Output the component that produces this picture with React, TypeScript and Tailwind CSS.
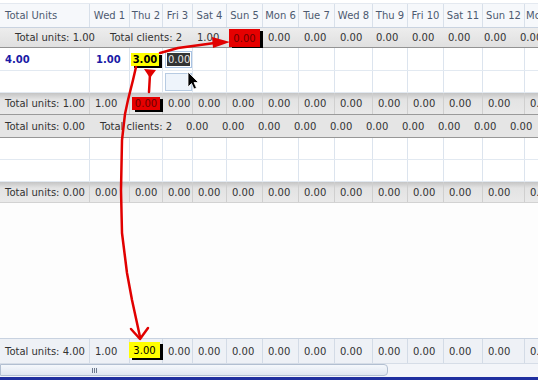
const COLS = [
  "w-[90px]",
  "w-[40px]",
  "w-[33px]",
  "w-[30px]",
  "w-[34px]",
  "w-[36px]",
  "w-[36px]",
  "w-[36px]",
  "w-[38px]",
  "w-[35px]",
  "w-[36px]",
  "w-[39px]",
  "w-[42px]",
  "w-[40px]",
];

const DAYS = ["Total Units", "Wed 1", "Thu 2", "Fri 3", "Sat 4", "Sun 5", "Mon 6", "Tue 7", "Wed 8", "Thu 9", "Fri 10", "Sat 11", "Sun 12", "Mon 13"];

const zeros = (n: number) => Array.from({ length: n }, () => "0.00");

function RedBox({ className }: { className: string }) {
  return (
    <span className={`flex items-center justify-center bg-[#e60000] text-[#6b0000] shadow-[3px_2px_0_#000] ${className}`}>
      0.00
    </span>
  );
}

function YellowBox({ className }: { className: string }) {
  return (
    <span className={`flex items-center justify-center bg-[#ffff00] text-black shadow-[3px_2px_0_#000] ${className}`}>
      3.00
    </span>
  );
}

// summary row that follows the day columns
function TotalsRow({ values, className, line, third }: { values: string[]; className: string; line: string; third?: React.ReactNode }) {
  return (
    <div className={`flex shrink-0 ${className}`}>
      {COLS.map((w, i) => (
        <div key={i} className={`${w} shrink-0 flex items-center border-r ${line} ${i === 2 && third ? "" : "pl-[5px]"}`}>
          {i === 2 && third ? third : values[i]}
        </div>
      ))}
    </div>
  );
}

function DataRow({ h, children }: { h: string; children?: React.ReactNode[] }) {
  return (
    <div className={`flex shrink-0 ${h} border-b border-[#e2e9f1] bg-white`}>
      {COLS.map((w, i) => (
        <div key={i} className={`${w} shrink-0 flex items-center border-r border-[#dce4ee]`}>
          {children ? children[i] : null}
        </div>
      ))}
    </div>
  );
}

export default function App() {
  return (
    <div className="relative w-[538px] h-[380px] overflow-hidden bg-white text-[10px] text-[#333] font-['DejaVu_Sans',Verdana,sans-serif]">
      <div className="flex flex-col h-full">
        {/* top strip */}
        <div className="h-[4px] shrink-0 border-b border-[#e4e9f0] bg-white" />

        {/* Header */}
        <div className="flex shrink-0 h-[24px] bg-[#f6f8fb] border-b border-[#c9d3e0] text-[#4d5a70]">
          {COLS.map((w, i) => (
            <div key={i} className={`${w} shrink-0 flex items-center border-r border-[#d8e0ea] ${i === 0 ? "pl-[5px]" : "justify-center"} whitespace-nowrap`}>
              {DAYS[i]}
            </div>
          ))}
        </div>

        {/* Group 1 */}
        <div className="flex shrink-0 h-[20px] items-center bg-linear-to-b from-[#ededed] to-[#e0e0e0] border-b border-[#939393] pl-[15px] whitespace-nowrap">
          <span className="w-[95px] shrink-0">Total units: 1.00</span>
          <span className="w-[87px] shrink-0">Total clients: 2</span>
          <span className="w-[32px] shrink-0">1.00</span>
          <RedBox className="w-[31px] h-[18px] mt-[1px] mr-[3px] shrink-0" />
          {zeros(8).map((z, i) => (
            <span key={i} className="w-[36px] shrink-0 pl-[5px]">{z}</span>
          ))}
        </div>

        <DataRow h="h-[23px]">
          {[
            <span key="a" className="pl-[5px] font-bold text-[#1a1aa6]">4.00</span>,
            <span key="b" className="pl-[6px] font-bold text-[#1a1aa6]">1.00</span>,
            <YellowBox key="c" className="ml-[1px] w-[28px] h-[13px] font-bold" />,
            <span key="d" className="ml-[2px] w-[28px] h-[17px] border border-[#a9c3e3] p-[1px] flex">
              <span className="flex-1 bg-[#333] text-[#e6e6e6] flex items-center pl-[1px]">0.00</span>
            </span>,
            ...Array.from({ length: 10 }, () => null),
          ]}
        </DataRow>
        <DataRow h="h-[22px]">
          {[
            null,
            null,
            null,
            <span key="d" className="ml-[2px] w-[27px] h-[18px] border border-[#b7cbe2] bg-[#eef4fb]" />,
            ...Array.from({ length: 10 }, () => null),
          ]}
        </DataRow>

        <TotalsRow
          className="h-[22px] bg-linear-to-b from-[#c4c4c4] via-[#e3e3e3] via-30% to-[#e9e9e9] border-b border-[#9a9a9a]"
          line="border-[#cfcfcf]"
          values={["Total units: 1.00", "1.00", "", ...zeros(11)]}
          third={<RedBox className="ml-[2px] w-[28px] h-[13px]" />}
        />

        {/* Group 2 */}
        <div className="flex shrink-0 h-[23px] items-center bg-[#e5e5e5] border-b border-[#979797] pl-[5px] whitespace-nowrap">
          <span className="w-[95px] shrink-0">Total units: 0.00</span>
          <span className="w-[86px] shrink-0">Total clients: 2</span>
          {zeros(10).map((z, i) => (
            <span key={i} className="w-[36px] shrink-0">{z}</span>
          ))}
        </div>

        <DataRow h="h-[22px]" />
        <DataRow h="h-[22px]" />

        <TotalsRow
          className="h-[21px] bg-linear-to-b from-[#c4c4c4] via-[#e3e3e3] via-30% to-[#e9e9e9] border-b border-[#d2d2d2]"
          line="border-[#cfcfcf]"
          values={["Total units: 0.00", "0.00", ...zeros(12)]}
        />

        <div className="flex-1 bg-[#fdfdfd]" />

        {/* Grand total */}
        <TotalsRow
          className="h-[25px] bg-[#eef1f6] border-t border-[#c8d2e0]"
          line="border-[#d3dbe6]"
          values={["Total units: 4.00", "1.00", "", ...zeros(11)]}
          third={<YellowBox className="-ml-[1px] w-[31px] h-[16px] -mt-[2px]" />}
        />

        {/* Scrollbar */}
        <div className="h-[14px] shrink-0 bg-[#f3f5f9] border-t border-[#d6dde7]">
          <div className="w-[388px] h-[12px] bg-linear-to-b from-[#f5f8fc] to-[#dfe6f0] border border-[#b2bfd1] rounded-r-[4px] flex items-center pl-[91px] gap-[1px]">
            <span className="w-[1px] h-[5px] bg-[#6d7a8e]" />
            <span className="w-[1px] h-[5px] bg-[#6d7a8e]" />
            <span className="w-[1px] h-[5px] bg-[#6d7a8e]" />
          </div>
        </div>
        <div className="h-[3px] shrink-0 bg-[#1f2f9f]" />
      </div>

      {/* Annotation arrows and cursor */}
      <svg className="absolute inset-0 pointer-events-none" width="538" height="380" viewBox="0 0 538 380">
        <g stroke="#e10000" strokeWidth="2.5" fill="none" strokeLinecap="round" strokeLinejoin="round">
          <path d="M160 53 L178 48 L200 45 L222 42" />
          <path d="M136 67 L133 80 L128 100 L125 114 L122 140 L121 190 L122 233 L127 273 L132 300 L137 323 L140 337" />
          <path d="M131 329 L140 339 L148 328" />
          <path d="M150 74 L149 92" />
        </g>
        <polygon points="212,37 230,42 213,48" fill="#e10000" />
        <polygon points="144,69 156,70 150,78" fill="#e10000" />
        <path d="M188 72 L188 87 L191.5 83.5 L194 89 L196.5 88 L194 82.5 L198.5 82.5 Z" fill="#000" stroke="#fff" strokeWidth="0.8" />
      </svg>
    </div>
  );
}
